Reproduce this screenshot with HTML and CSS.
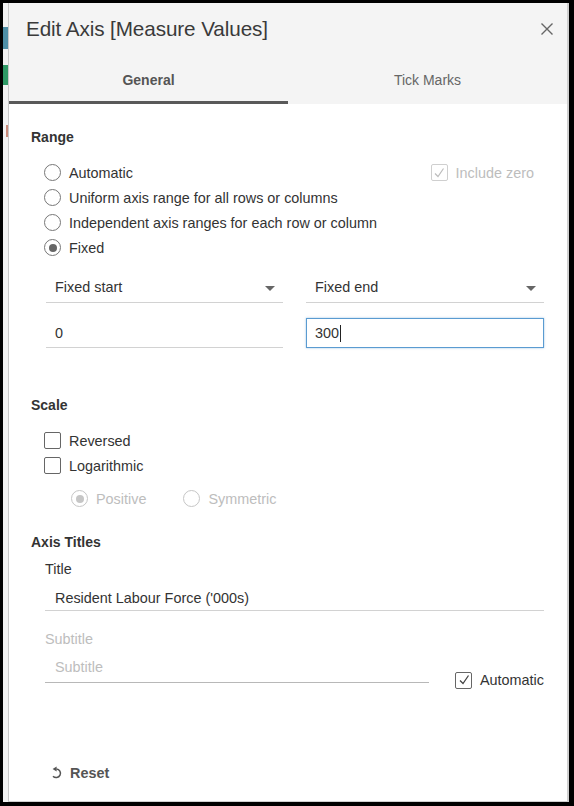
FILE: index.html
```html
<!DOCTYPE html>
<html>
<head>
<meta charset="utf-8">
<link rel="stylesheet" href="styles.css">
</head>
<body>
<div class="frame">
  <div class="app-strip">
    <span class="chip chip-blue"></span>
    <span class="chip chip-green"></span>
    <span class="chip chip-red"></span>
  </div>
  <div class="dialog">
    <header class="head">
      <div class="title-row">
        <h1 class="title">Edit Axis [Measure Values]</h1>
        <span class="close">
          <svg width="14" height="14" viewBox="0 0 14 14"><path d="M1.5 1.5 L12.5 12.5 M12.5 1.5 L1.5 12.5" stroke="#666" stroke-width="1.4" fill="none"/></svg>
        </span>
      </div>
      <nav class="tabs">
        <div class="tab tab-active">General</div>
        <div class="tab">Tick Marks</div>
      </nav>
    </header>

    <main class="content">
      <h2 class="section-title section-range">Range</h2>
      <div class="option-list">
        <div class="row row-split">
          <label class="opt"><span class="radio"></span>Automatic</label>
          <label class="opt opt-disabled"><span class="check check-disabled"><svg width="12" height="12" viewBox="0 0 12 12"><path d="M2 6.5 L5 9.5 L10.5 1.5" stroke="#bdbdbd" stroke-width="1.2" fill="none"/></svg></span>Include zero</label>
        </div>
        <div class="row"><label class="opt"><span class="radio"></span>Uniform axis range for all rows or columns</label></div>
        <div class="row"><label class="opt"><span class="radio"></span>Independent axis ranges for each row or column</label></div>
        <div class="row"><label class="opt"><span class="radio radio-on"></span>Fixed</label></div>
      </div>

      <div class="fields">
        <div class="select"><span>Fixed start</span><span class="caret"></span></div>
        <div class="select"><span>Fixed end</span><span class="caret"></span></div>
        <div class="input">0</div>
        <div class="input input-focus">300<span class="cursor"></span></div>
      </div>

      <h2 class="section-title section-scale">Scale</h2>
      <div class="option-list">
        <div class="row"><label class="opt"><span class="check"></span>Reversed</label></div>
        <div class="row"><label class="opt"><span class="check"></span>Logarithmic</label></div>
      </div>
      <div class="sub-radios">
        <label class="opt opt-disabled"><span class="radio radio-disabled radio-on"></span>Positive</label>
        <label class="opt opt-disabled"><span class="radio radio-disabled"></span>Symmetric</label>
      </div>

      <h2 class="section-title section-titles">Axis Titles</h2>
      <div class="title-block">
        <div class="field-label">Title</div>
        <div class="line-input">Resident Labour Force ('000s)</div>
        <div class="field-label field-label-disabled">Subtitle</div>
        <div class="subtitle-row">
          <div class="line-input line-input-sub">Subtitle</div>
          <label class="opt auto-opt"><span class="check"><svg width="12" height="12" viewBox="0 0 12 12"><path d="M2 6.5 L5 9.5 L10.5 1.5" stroke="#444" stroke-width="1.3" fill="none"/></svg></span>Automatic</label>
        </div>
      </div>
    </main>

    <footer class="foot">
      <span class="reset">
        <svg width="13" height="13" viewBox="0 0 13 13"><path d="M6.5 3 A4.3 4.3 0 1 1 3 10.2" stroke="#555" stroke-width="1.5" fill="none"/><path d="M2.6 3 L6.6 0.6 L6.6 5.4 Z" fill="#555"/></svg>
        Reset
      </span>
    </footer>
  </div>
</div>
</body>
</html>
```

FILE: styles.css
```css
* { box-sizing: border-box; }

html, body {
  margin: 0;
  padding: 0;
}

body {
  font-family: "Liberation Sans", Arial, sans-serif;
  font-size: 14px;
  color: #333;
}

.frame {
  width: 574px;
  height: 806px;
  background: #000;
  padding: 3px 5px 4px 3px;
  display: flex;
}

.app-strip {
  width: 5px;
  background: #f2f2f2;
  display: flex;
  flex-direction: column;
}

.chip {
  display: block;
  width: 5px;
}

.chip-blue { height: 22px; margin-top: 24px; background: #4f8fa6; }
.chip-green { height: 20px; margin-top: 16px; background: #2f9a66; }
.chip-red { height: 12px; margin-top: 40px; width: 2px; margin-left: 3px; background: #c98a7a; }

.dialog {
  flex: 1;
  background: #fff;
  border-left: 1px solid #c8c8c8;
  border-right: 2px solid #cfcfcf;
  border-bottom: 1px solid #cfcfcf;
  display: flex;
  flex-direction: column;
}

.head {
  background: #f4f4f4;
}

.title-row {
  height: 52px;
  display: flex;
  align-items: center;
  justify-content: space-between;
  padding: 0 13px 0 17px;
}

.title {
  margin: 0;
  font-family: "Liberation Sans", Arial, sans-serif;
  font-weight: normal;
  font-size: 20.7px;
  color: #3a3a3a;
  letter-spacing: -0.1px;
}

.close {
  display: flex;
  width: 14px;
  height: 14px;
}

.tabs {
  display: flex;
  height: 49px;
}

.tab {
  flex: 1;
  display: flex;
  align-items: center;
  justify-content: center;
  padding-top: 3px;
  border-bottom: 3px solid transparent;
  color: #666;
  font-size: 14px;
}

.tab-active {
  font-weight: bold;
  color: #555;
  border-bottom-color: #595959;
}

.content {
  padding: 0 23px 0 22px;
}

.section-title {
  margin: 0;
  font-size: 14px;
  line-height: 20px;
  font-weight: bold;
  color: #333;
}

.section-range { margin-top: 23px; }
.section-scale { margin-top: 47px; }
.section-titles { margin-top: 21px; }

.option-list {
  margin-top: 13px;
  padding-left: 13px;
}

.row {
  height: 25px;
  display: flex;
  align-items: center;
}

.row-split {
  justify-content: space-between;
  padding-right: 10px;
}

.opt {
  display: flex;
  align-items: center;
  gap: 8px;
  font-size: 14.4px;
  color: #333;
}

.opt-disabled { color: #bdbdbd; }

.radio {
  width: 17px;
  height: 17px;
  border: 1.3px solid #777;
  border-radius: 50%;
  display: flex;
  align-items: center;
  justify-content: center;
  background: #fff;
}

.radio-on::after {
  content: "";
  width: 8px;
  height: 8px;
  border-radius: 50%;
  background: #666;
}

.radio-disabled { border-color: #c6c6c6; }
.radio-disabled.radio-on::after { background: #c6c6c6; }

.check {
  width: 17px;
  height: 17px;
  border: 1.3px solid #666;
  border-radius: 2px;
  display: flex;
  align-items: center;
  justify-content: center;
  background: #fff;
}

.check-disabled { border-color: #cfcfcf; }

.fields {
  margin-top: 12px;
  margin-left: 15px;
  display: grid;
  grid-template-columns: 237px 238px;
  column-gap: 23px;
  row-gap: 15px;
}

.select {
  height: 31px;
  border-bottom: 1px solid #d2d2d2;
  display: flex;
  align-items: center;
  justify-content: space-between;
  padding: 0 8px 0 9px;
  font-size: 14.4px;
  color: #333;
}

.caret {
  width: 0;
  height: 0;
  border-left: 5px solid transparent;
  border-right: 5px solid transparent;
  border-top: 5px solid #666;
  margin-top: 2px;
}

.input {
  height: 30px;
  border-bottom: 1px solid #d2d2d2;
  display: flex;
  align-items: center;
  padding-left: 9px;
  font-size: 14.4px;
  color: #333;
}

.input-focus {
  border: 1px solid #5a9bd1;
  box-shadow: 0 0 2px rgba(90, 155, 209, 0.6);
  padding-left: 8px;
}

.cursor {
  display: inline-block;
  width: 1px;
  height: 17px;
  background: #222;
  margin-left: 1px;
}

.sub-radios {
  margin-top: 8px;
  height: 25px;
  padding-left: 40px;
  display: flex;
  align-items: center;
  gap: 37px;
}

.title-block {
  padding-left: 14px;
}

.field-label {
  margin-top: 7px;
  line-height: 20px;
  font-size: 14.4px;
  color: #333;
}

.field-label-disabled {
  margin-top: 18px;
  color: #bdbdbd;
}

.line-input {
  margin-top: 7px;
  height: 25px;
  border-bottom: 1px solid #d2d2d2;
  padding-left: 10px;
  display: flex;
  align-items: center;
  font-size: 14.4px;
  color: #333;
}

.subtitle-row {
  display: flex;
  align-items: flex-end;
  justify-content: space-between;
  margin-top: 6px;
}

.line-input-sub {
  margin-top: 0;
  width: 384px;
  height: 28px;
  padding-bottom: 4px;
  color: #bdbdbd;
  border-bottom-color: #b8b8b8;
}

.auto-opt {
  height: 20px;
  margin-bottom: -7px;
}

.foot {
  margin-top: auto;
  padding: 0 0 8px 41px;
  height: 49px;
  display: flex;
  align-items: center;
}

.reset {
  display: flex;
  align-items: center;
  gap: 7px;
  font-weight: bold;
  font-size: 14.4px;
  color: #555;
}
```
